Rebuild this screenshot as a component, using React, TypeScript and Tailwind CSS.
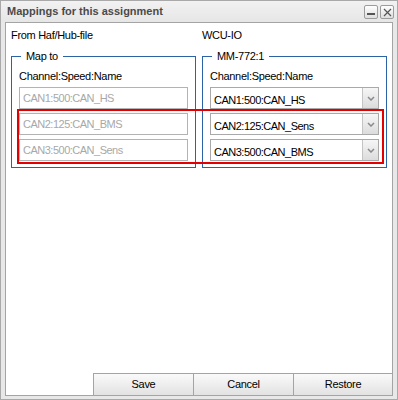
import React from 'react';

const leftRows = ['CAN1:500:CAN_HS', 'CAN2:125:CAN_BMS', 'CAN3:500:CAN_Sens'];
const rightRows = ['CAN1:500:CAN_HS', 'CAN2:125:CAN_Sens', 'CAN3:500:CAN_BMS'];

function TitleButton({ kind }: { kind: 'min' | 'close' }) {
  return (
    <div className="flex h-[14px] w-[14px] items-center justify-center rounded-[2px] border border-[#9c9c9c] bg-gradient-to-b from-white to-[#dedede]">
      {kind === 'min' ? (
        <div className="mt-[3px] h-[2px] w-[8px] bg-[#555]" />
      ) : (
        <svg width="9" height="9" viewBox="0 0 9 9">
          <path d="M1 1 L8 8 M8 1 L1 8" stroke="#555" strokeWidth="1.2" />
        </svg>
      )}
    </div>
  );
}

function SelectBox({ value }: { value: string }) {
  return (
    <div className="flex h-[22px] items-stretch border border-[#a9a9a9] bg-white">
      <div className="flex-1 pl-[3px] pt-[5px] text-[11px] leading-[14px] tracking-[-0.5px] text-black">{value}</div>
      <div className="flex w-[16px] items-center justify-center border-l border-[#c4c4c4] bg-gradient-to-b from-[#f6f6f6] to-[#dcdcdc]">
        <svg width="8" height="5" viewBox="0 0 8 5">
          <path d="M1 1 L4 4 L7 1" stroke="#8a8a8a" strokeWidth="1.5" fill="none" />
        </svg>
      </div>
    </div>
  );
}

function Column({ heading, legend, children }: { heading: string; legend: string; children: React.ReactNode }) {
  return (
    <div className="flex w-[185px] flex-col">
      <div className="h-[14px] text-[11px] leading-[14px] tracking-[-0.3px] text-black">{heading}</div>
      <fieldset className="mt-[7px] border border-[#2b63a6] px-[7px] pb-[6px]">
        <legend className="ml-[2px] px-[5px] text-[11px] leading-[14px] tracking-[-0.3px] text-black">{legend}</legend>
        <div className="mt-[6px] text-[11px] leading-[14px] tracking-[-0.3px] text-black">Channel:Speed:Name</div>
        <div className="mt-[4px] flex flex-col gap-[4px]">{children}</div>
      </fieldset>
    </div>
  );
}

export default function App() {
  return (
    <div
      className="relative flex h-[400px] w-[398px] flex-col border border-[#a9a9a9] bg-[#e8e8e8]"
      style={{ fontFamily: '"Liberation Sans", Arial, sans-serif' }}
    >
      <div className="flex h-[21px] items-center justify-between bg-gradient-to-b from-[#f2f2f2] to-[#e6e6e6] pl-[6px] pr-[3px]">
        <span className="text-[11px] font-bold text-[#4a4a4a]">Mappings for this assignment</span>
        <div className="flex gap-[2px] pt-[1px]">
          <TitleButton kind="min" />
          <TitleButton kind="close" />
        </div>
      </div>

      <div className="mx-[4px] mb-[3px] flex flex-1 flex-col border border-[#a4a4a4] bg-white">
        <div className="flex flex-1 gap-[6px] pl-[5px] pt-[5px]">
          <Column heading="From Haf/Hub-file" legend="Map to">
            {leftRows.map((row) => (
              <div
                key={row}
                className="flex h-[22px] items-center border border-[#b3b3b3] pl-[3px] text-[11px] leading-[14px] tracking-[-0.5px] text-[#a8a8a8]"
              >
                {row}
              </div>
            ))}
          </Column>
          <Column heading="WCU-IO" legend="MM-772:1">
            {rightRows.map((row) => (
              <SelectBox key={row} value={row} />
            ))}
          </Column>
        </div>

        <div className="flex justify-end">
          {['Save', 'Cancel', 'Restore'].map((label) => (
            <button
              key={label}
              type="button"
              className="h-[22px] w-[100px] border-t border-l border-[#a4a4a4] bg-gradient-to-b from-[#fafafa] to-[#e2e2e2] text-[11px] tracking-[-0.3px] text-black last:w-[99px]"
            >
              {label}
            </button>
          ))}
        </div>
      </div>

      <div className="absolute left-[16px] top-[108px] h-[55px] w-[367px] border-2 border-[#e30000]" />
    </div>
  );
}
